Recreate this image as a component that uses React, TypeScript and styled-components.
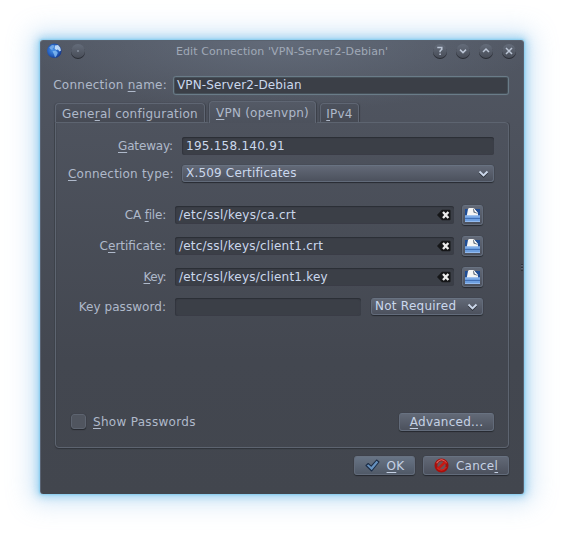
import React from 'react';
import styled, { createGlobalStyle, css } from 'styled-components';

const GlobalStyle = createGlobalStyle`
  body { margin: 0; background: #fff; overflow: hidden; }
  * { box-sizing: border-box; }
  button, input { font: inherit; }
`;

const Page = styled.div`
  width: 564px;
  height: 534px;
  padding: 40px;
  background: #fff;
  font: 12px 'DejaVu Sans', sans-serif;
  color: #afb9ca;
`;

const Window = styled.div`
  width: 484px;
  height: 454px;
  display: flex;
  flex-direction: column;
  border-radius: 3px;
  border-left: 1px solid #596373;
  border-right: 1px solid #596373;
  border-top: 1px solid #59626f;
  background:
    radial-gradient(ellipse 260px 70px at 50% 0, rgba(115, 126, 143, 0.5), rgba(115, 126, 143, 0) 100%),
    linear-gradient(#515763 0, #4e535e 80px, #434750 320px, #42464e 100%);
  box-shadow:
    0 0 2px 1px rgba(120, 200, 238, 0.7),
    0 0 9px 3px rgba(125, 198, 236, 0.65),
    0 0 24px 9px rgba(150, 195, 235, 0.42);
`;

const TitleBar = styled.header`
  height: 35px;
  padding: 2px 6px 0 6px;
  display: flex;
  align-items: flex-start;
  gap: 7px;
`;

const Title = styled.div`
  flex: 1;
  padding: 2px 0 0 83px;
  color: #a0a9b7;
  font-size: 11px;
  line-height: 13px;
  letter-spacing: 0.09px;
  white-space: nowrap;
`;

const RoundButton = styled.button`
  width: 16px;
  height: 16px;
  padding: 0;
  border: 1px solid transparent;
  border-radius: 50%;
  display: grid;
  place-items: center;
  background: linear-gradient(#646c7a, #484d58) padding-box;
  filter: drop-shadow(0 1px 0.6px rgba(30, 33, 39, 0.8));
  svg { display: block; }
`;

const WindowIcon = styled.div`
  width: 16px;
  height: 16px;
  svg { display: block; }
`;

const Row = styled.div<{ $h: number; $mt?: number }>`
  display: flex;
  align-items: center;
  height: ${p => p.$h}px;
  margin-top: ${p => p.$mt ?? 0}px;
`;

const Label = styled.label<{ $w: number; $gap: number; $ls?: number; $lift?: number }>`
  width: ${p => p.$w}px;
  margin-right: ${p => p.$gap}px;
  padding-bottom: ${p => p.$lift ?? 0}px;
  text-align: right;
  white-space: nowrap;
  line-height: 16px;
  letter-spacing: ${p => p.$ls ?? 0.25}px;
`;

const Mnemonic = styled.span`
  text-decoration: underline;
  text-decoration-thickness: 1px;
  text-underline-offset: 2px;
  text-decoration-skip-ink: none;
`;

const Field = styled.div<{ $w: number; $focused?: boolean; $ls?: number }>`
  width: ${p => p.$w}px;
  height: 18px;
  padding: 0 3px 0 4px;
  display: flex;
  align-items: center;
  justify-content: space-between;
  border-radius: 3px;
  background: #3b3f47;
  color: #cbd8ed;
  line-height: 16px;
  white-space: nowrap;
  letter-spacing: ${p => p.$ls ?? 0.25}px;
  box-shadow: inset 0 1px 1px #2b2e35, inset 1px 0 1px #333740, inset -1px 0 1px #3e424b;
  ${p => p.$focused && css`
    height: 19px;
    padding: 0 3px 2px;
    border: 1px solid #6a7c88;
    box-shadow: inset 0 0 0 1px #465059, 0 0 1px #65747f;
  `}
`;

const raised = css`
  border: 1px solid #626b7a;
  border-top-color: #687281;
  border-radius: 3px;
  background: linear-gradient(#626977, #4c515d);
  box-shadow: 0 1px 1px rgba(30, 32, 38, 0.75), 0 0 1px rgba(30, 32, 38, 0.6);
`;

const Combo = styled.div<{ $w: number; $ls?: number }>`
  ${raised}
  width: ${p => p.$w}px;
  height: 17px;
  margin-bottom: 1px;
  padding: 0 4px 0 3px;
  display: flex;
  align-items: center;
  justify-content: space-between;
  color: #cbd8ed;
  line-height: 15px;
  white-space: nowrap;
  letter-spacing: ${p => p.$ls ?? 0.25}px;
  svg { display: block; }
`;

const Button = styled.button<{ $w: number; $h: number; $bright?: boolean }>`
  ${raised}
  width: ${p => p.$w}px;
  height: ${p => p.$h}px;
  padding: 0;
  display: flex;
  align-items: center;
  justify-content: center;
  gap: 7px;
  color: #c5d1e4;
  line-height: 15px;
  letter-spacing: 0.25px;
  ${p => p.$bright && css`background: linear-gradient(#687485, #505967);`}
  svg { display: block; flex: none; }
`;

const FooterButton = styled(Button)`
  span { padding-top: 2px; }
`;

const FileButton = styled.button`
  ${raised}
  width: 21px;
  height: 20px;
  margin-left: 8px;
  padding: 0;
  display: grid;
  place-items: center;
`;

const Tabs = styled.nav`
  height: 21px;
  margin: 6px 0 0 14px;
  display: flex;
  align-items: flex-end;
  gap: 4px;
`;

const Tab = styled.div<{ $w: number; $active?: boolean }>`
  width: ${p => p.$w}px;
  height: 19px;
  padding-top: 2px;
  border: 1px solid #5f6673;
  border-bottom: 0;
  border-radius: 4px 4px 0 0;
  background: linear-gradient(#4c515c, #464a54);
  box-shadow: 1px 0 1px rgba(40, 43, 50, 0.5), -1px 0 1px rgba(40, 43, 50, 0.3);
  text-align: center;
  line-height: 17px;
  white-space: nowrap;
  letter-spacing: 0.25px;
  ${p => p.$active && css`
    position: relative;
    height: 22px;
    margin-bottom: -1px;
    padding-top: 3px;
    background: linear-gradient(#545a66, #4c515c);
    clip-path: inset(-2px -2px 0 -2px);
  `}
`;

const Panel = styled.section`
  width: 454px;
  height: 326px;
  margin-left: 14px;
  padding: 14px 14px 0 12px;
  border: 1px solid #5d6470;
  border-radius: 0 4px 4px 4px;
  box-shadow: 0 1px 1px #30333a, inset 1px 0 0 rgba(50, 53, 61, 0.2), -1px 0 0 #40444d, 1px 0 0 #40444d;
`;

const Checkbox = styled.span`
  ${raised}
  width: 15px;
  height: 15px;
  margin-left: 3px;
  margin-bottom: 1px;
  border-color: #5d6470;
  background: #50555f;
`;

const CheckLabel = styled.span`
  flex: 1;
  margin-left: 7px;
  line-height: 16px;
  letter-spacing: 0.3px;
`;

const PasswordField = styled(Field)`
  margin-right: 10px;
`;

const Footer = styled.footer`
  display: flex;
  justify-content: flex-end;
  gap: 8px;
  margin: 8px 14px 0 0;
`;

const Grip = styled.i`
  position: absolute;
  left: 521px;
  top: 264px;
  width: 2px;
  height: 7px;
  background: repeating-linear-gradient(#30343b 0 1px, #596170 1px 2px, transparent 2px 3px);
`;

const GlobeIcon = () => (
  <svg width="16" height="16" viewBox="0 0 16 16">
    <defs>
      <radialGradient id="globe" cx="42%" cy="45%" r="62%">
        <stop offset="0" stopColor="#4b95ea" />
        <stop offset="0.6" stopColor="#2460c0" />
        <stop offset="1" stopColor="#163382" />
      </radialGradient>
    </defs>
    <circle cx="7.3" cy="7.8" r="7.3" fill="url(#globe)" />
    <path d="M2.2 4.5 5 2l2.5.3-.4 2L5.6 5.5 5.4 7 3.6 6.2z" fill="#8fc0f2" opacity=".7" />
    <path d="M8 2.6 11 2l2.2 2.5.8 3-1.5 1-1.6-2-1.8.4L7.6 5.5z" fill="#d4ebff" opacity=".85" />
    <path d="M5.5 8.2 8.8 7.6l2 2.2-1.2 2.9L8 14.6l-1-3z" fill="#8cc3f6" opacity=".75" />
  </svg>
);

const Chevron = () => (
  <svg width="11" height="9" viewBox="0 0 11 9" fill="none">
    <path d="m1.5 3.7 4 4 4-4" stroke="#2c3038" strokeWidth="1.8" />
    <path d="m1.5 2.5 4 4 4-4" stroke="#cbd7ea" strokeWidth="1.9" />
  </svg>
);

const glyphs = {
  dot: <circle cx="8" cy="8" r=".8" fill="#aab4c4" />,
  help: <path d="M6 5.3V4.4h3.8v2L8.1 8v1.3M8.1 10.4v1.5" />,
  down: <path d="m5 6.6 3 3 3-3" />,
  up: <path d="m5 9 3-3 3 3" />,
  close: <path d="m5 5 6 6M11 5l-6 6" />,
};

const WindowButton = ({ glyph }: { glyph: keyof typeof glyphs }) => (
  <RoundButton>
    <svg width="14" height="14" viewBox="1 1 14 14" fill="none" stroke={glyph === 'dot' ? 'none' : '#bcc6d6'} strokeWidth="1.5">
      {glyphs[glyph]}
    </svg>
  </RoundButton>
);

const ClearIcon = () => (
  <svg width="14" height="12" viewBox="0 0 14 12">
    <path d="M0 6 5 .8h7.5q1 0 1 1v8.4q0 1-1 1H5z" fill="#151618" />
    <path d="m6 3 5.4 6M11.4 3 6 9" stroke="#ececec" strokeWidth="2.3" fill="none" />
  </svg>
);

const FileIcon = () => (
  <svg width="17" height="16" viewBox="0 0 17 16">
    <path d="M1 2h3v8H1zM10 2h6v8h-6z" fill="#1f4c93" />
    <path d="M2.5 10 4 2l1-.9h4.5L14 6.3V10z" fill="#f5f5f4" />
    <path d="m9 1.2.6 4.2 4.2 1.4z" fill="#4f5b6c" />
    <path d="m9.6 1.1 4.4 5-3.2-1z" fill="#fff" />
    <path d="M1 8.5h15V15H1z" fill="#6d9fe0" />
    <path d="M1 9h15M1 14.5h15" stroke="#94bbee" />
    <path d="M1 11.5h15" stroke="#3f6eb5" />
  </svg>
);

const CheckIcon = () => (
  <svg width="15" height="13" viewBox="0 0 15 13">
    <path d="m1 6.5 2.2-2 3 2.7L11.6 1 14 3 6.7 12z" fill="#6691bf" stroke="#1c2d46" strokeWidth="1.1" strokeLinejoin="round" />
  </svg>
);

const CancelIcon = () => (
  <svg width="15" height="15" viewBox="0 0 15 15">
    <circle cx="7.5" cy="7.5" r="5.6" fill="#6d5257" stroke="#a80f0b" strokeWidth="2.8" />
    <path d="M2.6 5.2Q7.5-1.8 12.4 5.2" stroke="#e0685f" strokeWidth="1.1" fill="none" />
    <path d="m3.8 11.2 7.4-7.4" stroke="#c81a14" strokeWidth="2.6" />
    <path d="M3 9.6Q7.5 15 12.4 9" stroke="#d1251e" strokeWidth="1.2" fill="none" />
  </svg>
);

const M = Mnemonic;

export default function App() {
  return (
    <Page>
      <GlobalStyle />
      <Window>
        <TitleBar>
          <WindowIcon><GlobeIcon /></WindowIcon>
          <WindowButton glyph="dot" />
          <Title>Edit Connection 'VPN-Server2-Debian'</Title>
          <WindowButton glyph="help" />
          <WindowButton glyph="down" />
          <WindowButton glyph="up" />
          <WindowButton glyph="close" />
        </TitleBar>

        <Row $h={19}>
          <Label $w={126} $gap={6} $lift={2}>Connection <M>n</M>ame:</Label>
          <Field $w={336} $focused $ls={0.12}>VPN-Server2-Debian</Field>
        </Row>

        <Tabs>
          <Tab $w={150}>Gene<M>r</M>al configuration</Tab>
          <Tab $w={107} $active><M>V</M>PN (openvpn)</Tab>
          <Tab $w={39}><M>I</M>Pv4</Tab>
        </Tabs>

        <Panel>
          <Row $h={18}>
            <Label $w={105} $gap={9} $ls={-0.15}><M>G</M>ateway:</Label>
            <Field $w={312}>195.158.140.91</Field>
          </Row>
          <Row $h={18} $mt={10}>
            <Label $w={105} $gap={9} $ls={0.2}><M>C</M>onnection type:</Label>
            <Combo $w={312} $ls={0.18}>X.509 Certificates<Chevron /></Combo>
          </Row>
          <Row $h={20} $mt={22}>
            <Label $w={98} $gap={9} $ls={-0.2}>CA <M>f</M>ile:</Label>
            <Field $w={279}>/etc/ssl/keys/ca.crt<ClearIcon /></Field>
            <FileButton><FileIcon /></FileButton>
          </Row>
          <Row $h={20} $mt={11}>
            <Label $w={98} $gap={9} $ls={0}>C<M>e</M>rtificate:</Label>
            <Field $w={279} $ls={0.22}>/etc/ssl/keys/client1.crt<ClearIcon /></Field>
            <FileButton><FileIcon /></FileButton>
          </Row>
          <Row $h={20} $mt={11}>
            <Label $w={98} $gap={9} $ls={-0.6}><M>K</M>ey:</Label>
            <Field $w={279} $ls={0.22}>/etc/ssl/keys/client1.key<ClearIcon /></Field>
            <FileButton><FileIcon /></FileButton>
          </Row>
          <Row $h={18} $mt={11}>
            <Label $w={98} $gap={9} $ls={0.05}>Key password:</Label>
            <PasswordField $w={186} />
            <Combo $w={112}>Not Required<Chevron /></Combo>
          </Row>
          <Row $h={18} $mt={97}>
            <Checkbox />
            <CheckLabel><M>S</M>how Passwords</CheckLabel>
            <Button $w={95} $h={18}><span><M>A</M>dvanced...</span></Button>
          </Row>
        </Panel>

        <Footer>
          <FooterButton $w={61} $h={19} $bright><CheckIcon /><span><M>O</M>K</span></FooterButton>
          <FooterButton $w={86} $h={19}><CancelIcon /><span>Cance<M>l</M></span></FooterButton>
        </Footer>
      </Window>
      <Grip />
    </Page>
  );
}
